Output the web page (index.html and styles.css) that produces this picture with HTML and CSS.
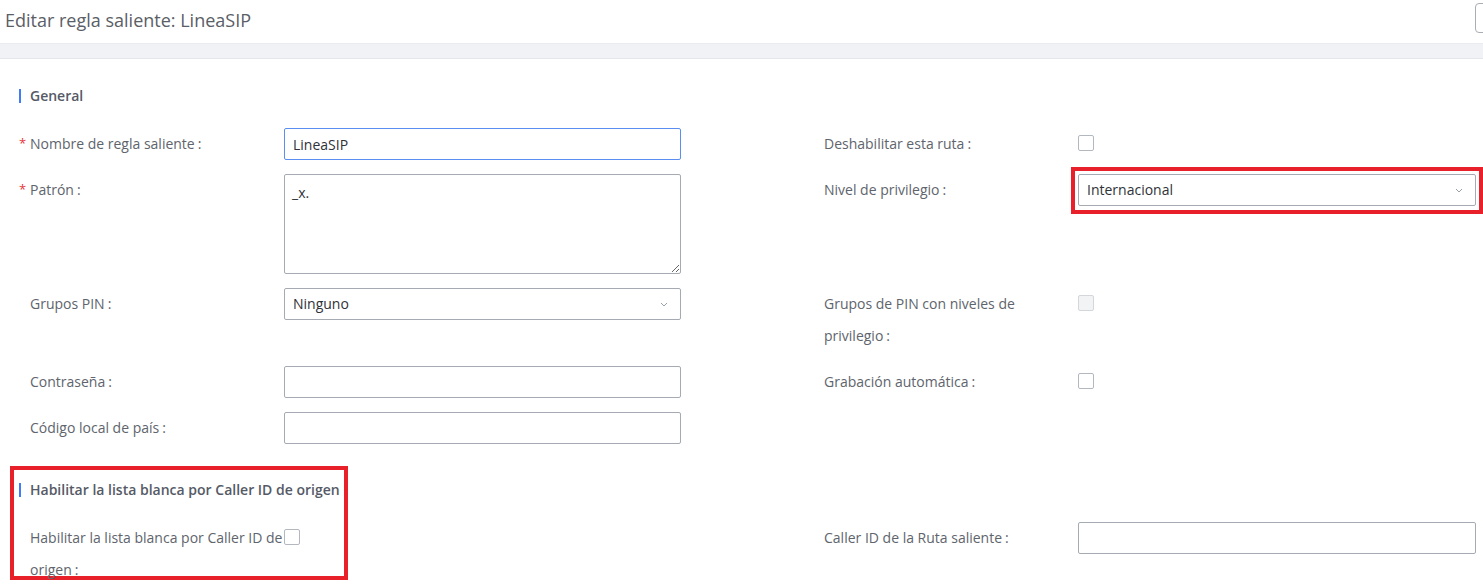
FILE: index.html
```html
<!DOCTYPE html>
<html lang="es">
<head>
<meta charset="utf-8">
<title>Editar regla saliente</title>
<link rel="stylesheet" href="styles.css">
</head>
<body>
<header class="topbar">
  <h1 class="title">Editar regla saliente: LineaSIP</h1>
  <button class="top-btn" type="button"></button>
</header>
<div class="band"></div>
<main class="content">
  <section class="section first">
    <h2 class="section-title">General</h2>
    <div class="row">
      <div class="field">
        <label class="label req">Nombre de regla saliente<span class="colon">:</span></label>
        <input class="input focused" type="text" value="LineaSIP">
      </div>
      <div class="field">
        <label class="label">Deshabilitar esta ruta<span class="colon">:</span></label>
        <span class="checkbox"></span>
      </div>
    </div>
    <div class="row">
      <div class="field">
        <label class="label req">Patrón<span class="colon">:</span></label>
        <textarea class="textarea">_x.</textarea>
      </div>
      <div class="field">
        <label class="label">Nivel de privilegio<span class="colon">:</span></label>
        <div class="select highlight">
          <span>Internacional</span>
          <svg class="chev" width="8" height="5" viewBox="0 0 8 5"><path d="M1 1l3 3 3-3" fill="none" stroke="#9aa0a8" stroke-width="1"/></svg>
        </div>
      </div>
    </div>
    <div class="row">
      <div class="field">
        <label class="label">Grupos PIN<span class="colon">:</span></label>
        <div class="select">
          <span>Ninguno</span>
          <svg class="chev" width="8" height="5" viewBox="0 0 8 5"><path d="M1 1l3 3 3-3" fill="none" stroke="#9aa0a8" stroke-width="1"/></svg>
        </div>
      </div>
      <div class="field">
        <label class="label">Grupos de PIN con niveles de<br>privilegio<span class="colon">:</span></label>
        <span class="checkbox disabled"></span>
      </div>
    </div>
    <div class="row">
      <div class="field">
        <label class="label">Contraseña<span class="colon">:</span></label>
        <input class="input" type="text" value="">
      </div>
      <div class="field">
        <label class="label">Grabación automática<span class="colon">:</span></label>
        <span class="checkbox"></span>
      </div>
    </div>
    <div class="row">
      <div class="field">
        <label class="label">Código local de país<span class="colon">:</span></label>
        <input class="input" type="text" value="">
      </div>
      <div class="field"></div>
    </div>
  </section>
  <section class="section second">
    <div class="annotation"></div>
    <h2 class="section-title">Habilitar la lista blanca por Caller ID de origen</h2>
    <div class="row">
      <div class="field">
        <label class="label">Habilitar la lista blanca por Caller ID de<br>origen<span class="colon">:</span></label>
        <span class="checkbox"></span>
      </div>
      <div class="field">
        <label class="label">Caller ID de la Ruta saliente<span class="colon">:</span></label>
        <input class="input" type="text" value="">
      </div>
    </div>
  </section>
</main>
</body>
</html>
```
FILE: styles.css
```css
* { box-sizing: border-box; }
html, body {
  margin: 0;
  padding: 0;
  background: #fff;
  overflow: hidden;
  font-family: "Open Sans", "Noto Sans", sans-serif;
}
.topbar {
  height: 43px;
  display: flex;
  align-items: center;
  justify-content: space-between;
  padding-left: 5px;
  background: #fff;
}
.title {
  margin: 0 0 4px 0;
  font-size: 18px;
  font-weight: 400;
  color: #5a5e66;
}
.top-btn {
  width: 30px;
  height: 30px;
  margin-right: -22px;
  margin-bottom: 7px;
  border: 1px solid #a9adb4;
  border-radius: 4px;
  background: #fff;
}
.band {
  height: 16px;
  background: #f0f2f5;
  border-top: 1px solid #e8ebef;
  border-bottom: 1px solid #e3e6eb;
}
.content {
  padding: 5px 0 0 19px;
}
.section {
  position: relative;
  display: flow-root;
}
.section-title {
  margin: 22px 0 22px 0;
  height: 20px;
  line-height: 20px;
  font-size: 14px;
  font-weight: 600;
  color: #555a66;
  padding-left: 11px;
  position: relative;
}
.section-title::before {
  content: "";
  position: absolute;
  left: 0;
  top: 3px;
  width: 2px;
  height: 14px;
  background: #3f7cf6;
}
.row {
  display: grid;
  grid-template-columns: 794px 1fr;
  margin-bottom: 14px;
}
.field {
  display: flex;
  align-items: flex-start;
}
.label {
  width: 265px;
  flex: none;
  padding-left: 11px;
  font-size: 14px;
  line-height: 32px;
  color: #60646c;
  position: relative;
}
.label .colon { margin-left: 3px; }
.label.req::before {
  content: "*";
  position: absolute;
  left: 0;
  top: -1px;
  color: #e8343a;
  font-size: 13px;
}
.input, .select, .textarea {
  width: 397px;
  height: 32px;
  border: 1px solid #a6abb3;
  border-radius: 2px;
  background: #fff;
  font-family: "Open Sans", "Noto Sans", sans-serif;
  font-size: 14px;
  color: #2f3238;
  padding: 0 8px;
  margin: 0;
  outline: none;
}
.field:last-child .input, .field:last-child .select { width: 398px; }
.input.focused { border-color: #5b8ef0; }
.textarea {
  height: 100px;
  padding: 8px 7px;
  line-height: 20px;
  resize: vertical;
  display: block;
}
.select {
  display: flex;
  align-items: center;
  justify-content: space-between;
  padding: 0 12px 0 8px;
  position: relative;
}
.select span { margin-top: -1px; }
.select.highlight::after {
  content: "";
  position: absolute;
  left: -8px;
  top: -8px;
  right: -8px;
  bottom: -9px;
  border: 4px solid #e8202a;
  pointer-events: none;
}
.chev { display: block; }
.checkbox {
  display: block;
  width: 16px;
  height: 16px;
  margin-top: 7px;
  border: 1px solid #b3b8c0;
  border-radius: 2px;
  background: #fff;
}
.checkbox.disabled {
  background: #f2f3f5;
  border-color: #d3d6db;
}
.annotation {
  position: absolute;
  left: -9px;
  top: 8px;
  width: 338px;
  height: 114px;
  border: 4px solid #e8202a;
  pointer-events: none;
}
```
